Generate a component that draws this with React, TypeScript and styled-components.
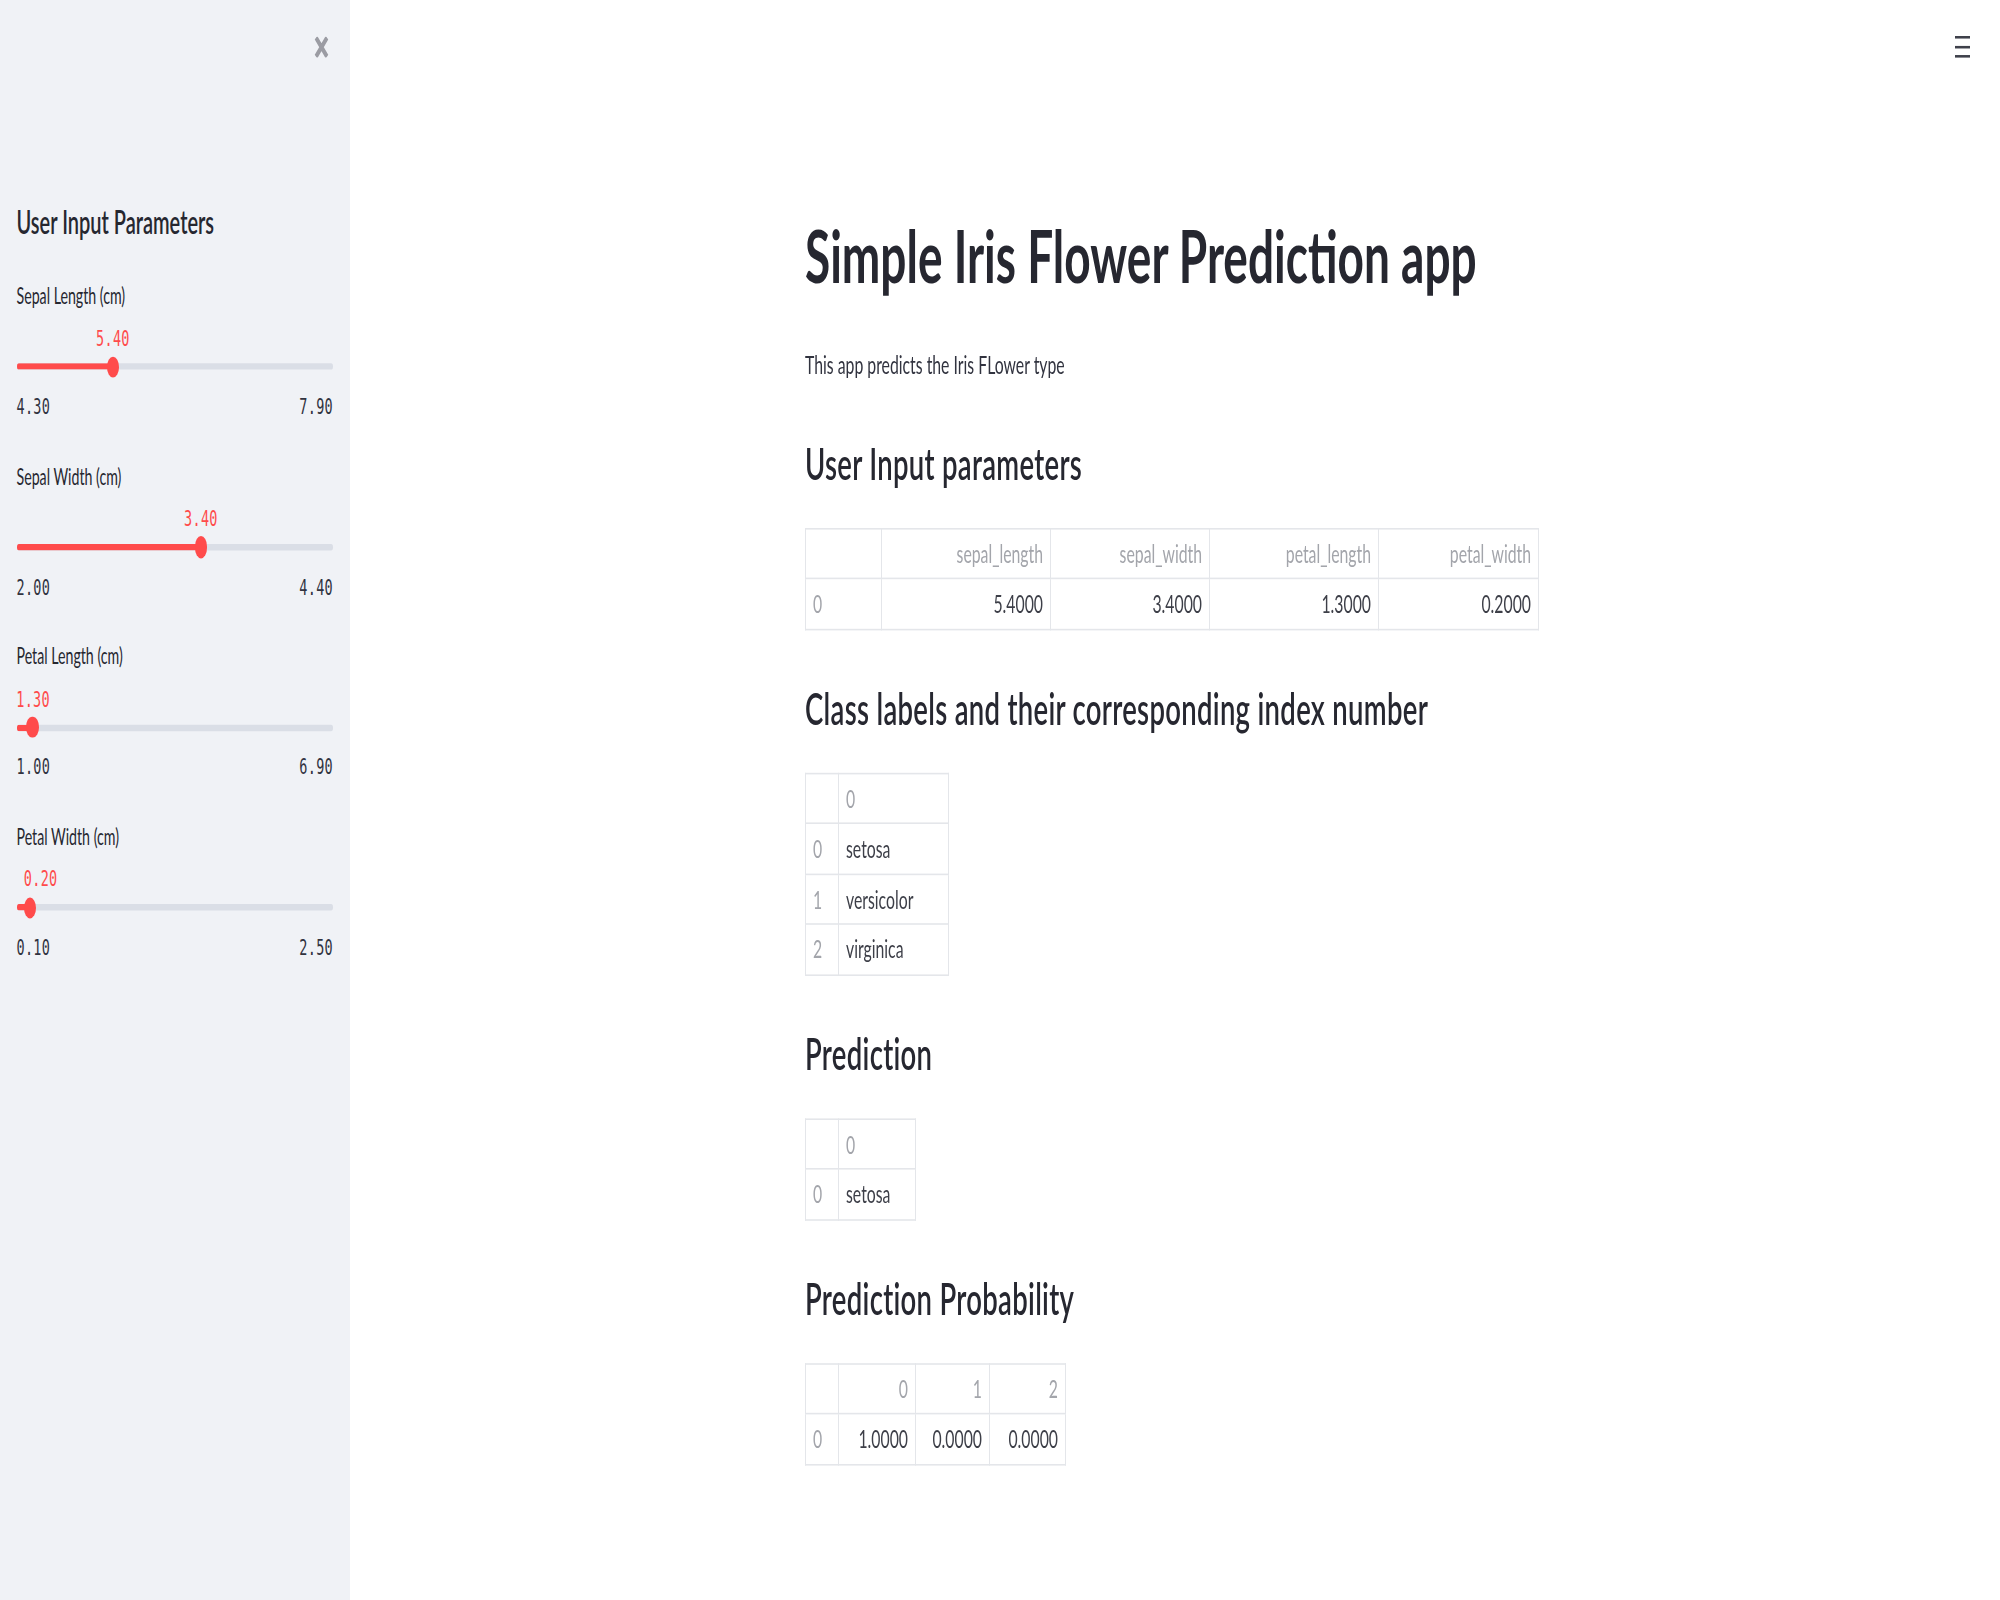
import React from "react";
import styled, { createGlobalStyle } from "styled-components";

const STRETCH = 1.6;

const GlobalStyle = createGlobalStyle`
  html, body {
    margin: 0;
    padding: 0;
    background: #ffffff;
  }
  body {
    font-family: Lato, "Liberation Sans", sans-serif;
    color: #262730;
  }
  * { box-sizing: border-box; }
`;

const Viewport = styled.div`
  width: 2000px;
  height: 1600px;
  overflow: hidden;
`;

const Stage = styled.div`
  width: 2000px;
  height: ${1600 / STRETCH}px;
  transform: scaleY(${STRETCH});
  transform-origin: 0 0;
  display: grid;
  grid-template-columns: 350px 1fr;
`;

/* ---------- Sidebar ---------- */

const Sidebar = styled.aside`
  background: #f0f2f6;
  padding: 22.6px 17px 0 16.5px;
  display: flex;
  flex-direction: column;
`;

const CloseRow = styled.div`
  display: flex;
  justify-content: flex-end;
  padding-right: 4.5px;
  height: 13px;
`;

const CloseIcon = styled.svg`
  width: 15px;
  height: 13px;
  display: block;
`;

const SidebarTitle = styled.h2`
  margin: 89.5px 0 23.9px;
  font-size: 20px;
  line-height: 26px;
  height: 26px;
  font-weight: 600;
  color: #262730;
  white-space: nowrap;
`;

const SliderBlock = styled.div`
  display: flex;
  flex-direction: column;
  & + & {
    margin-top: 25.6px;
  }
`;

const SliderLabel = styled.div`
  font-size: 14.2px;
  line-height: 20px;
  height: 20px;
  color: #262730;
`;

const ValueRow = styled.div`
  position: relative;
  height: 16px;
  margin-top: 8.5px;
`;

const monoFont = `"DejaVu Sans Mono", "Liberation Mono", monospace`;

const ThumbValue = styled.span`
  position: absolute;
  top: 0;
  transform: translateX(-50%);
  font-family: ${monoFont};
  font-size: 13.5px;
  line-height: 16px;
  letter-spacing: 0.3px;
  color: #ff4b4b;
  white-space: nowrap;
`;

const TrackRow = styled.div`
  position: relative;
  height: 13.5px;
  margin-top: 3.15px;
  display: flex;
  align-items: center;
`;

const Track = styled.div`
  position: relative;
  width: 100%;
  height: 4px;
  border-radius: 2px;
  background: #dadee6;
  overflow: hidden;
`;

const TrackFill = styled.div`
  height: 100%;
  background: #ff4b4b;
`;

const Thumb = styled.div`
  position: absolute;
  top: 0;
  width: 12.4px;
  height: 13.5px;
  margin-left: -6.2px;
  border-radius: 50%;
  background: #ff4b4b;
`;

const MinMaxRow = styled.div`
  display: flex;
  justify-content: space-between;
  margin-top: 9.9px;
  font-family: ${monoFont};
  font-size: 13.5px;
  line-height: 16px;
  letter-spacing: 0.3px;
  color: #31333f;
`;

/* ---------- Main ---------- */

const Main = styled.main`
  position: relative;
  padding: 132px 0 0 455px;
  display: flex;
  flex-direction: column;
  align-items: flex-start;
`;

const MenuButton = styled.svg`
  position: absolute;
  top: 22.3px;
  right: 30px;
  width: 15px;
  height: 14.5px;
`;

const Title = styled.h1`
  margin: 0;
  font-size: 46px;
  line-height: 56px;
  height: 56px;
  font-weight: 700;
  color: #262730;
  white-space: nowrap;
`;

const Intro = styled.p`
  margin: 26.8px 0 0;
  font-size: 15.8px;
  line-height: 26px;
  font-weight: 400;
  color: #31333f;
`;

const SectionTitle = styled.h2`
  margin: 31px 0 22px;
  font-size: 27.5px;
  letter-spacing: 0.3px;
  line-height: 36px;
  height: 36px;
  font-weight: 600;
  color: #262730;
  white-space: nowrap;
`;

const Table = styled.table<{ $width: number }>`
  width: ${(p) => p.$width}px;
  border-collapse: collapse;
  table-layout: fixed;
  font-size: 15.8px;
  border: 1px solid #e4e6ea;
`;

const Col = styled.col<{ $w: number }>`
  width: ${(p) => p.$w}px;
`;

const HeadCell = styled.th<{ $align: "left" | "right" }>`
  padding: 0 7px;
  height: 30.5px;
  line-height: 30.5px;
  font-weight: 400;
  color: #a3a5ab;
  text-align: ${(p) => p.$align};
  border: 1px solid #e4e6ea;
  white-space: nowrap;
  overflow: hidden;
`;

const IndexCell = styled.th`
  padding: 0 7px;
  height: 30.5px;
  line-height: 30.5px;
  font-weight: 400;
  color: #a3a5ab;
  text-align: left;
  border: 1px solid #e4e6ea;
`;

const DataCell = styled.td<{ $align: "left" | "right" }>`
  padding: 0 7px;
  height: 30.5px;
  line-height: 30.5px;
  color: #3d3f48;
  text-align: ${(p) => p.$align};
  border: 1px solid #e4e6ea;
  white-space: nowrap;
  overflow: hidden;
`;

/* ---------- Data ---------- */

type SliderData = {
  label: string;
  min: number;
  max: number;
  value: number;
  labelX: number;
};

const TRACK_WIDTH = 316.5;

const sliders: SliderData[] = [
  { label: "Sepal Length (cm)", min: 4.3, max: 7.9, value: 5.4, labelX: 96.4 },
  { label: "Sepal Width (cm)", min: 2.0, max: 4.4, value: 3.4, labelX: 184.4 },
  { label: "Petal Length (cm)", min: 1.0, max: 6.9, value: 1.3, labelX: 16.6 },
  { label: "Petal Width (cm)", min: 0.1, max: 2.5, value: 0.2, labelX: 24.2 },
];

type TableData = {
  cols: number[];
  headers: string[];
  align: ("left" | "right")[];
  rows: string[][];
};

const tables: { title: string; data: TableData }[] = [
  {
    title: "User Input parameters",
    data: {
      cols: [76, 169, 159, 169, 160],
      headers: ["sepal_length", "sepal_width", "petal_length", "petal_width"],
      align: ["right", "right", "right", "right"],
      rows: [["5.4000", "3.4000", "1.3000", "0.2000"]],
    },
  },
  {
    title: "Class labels and their corresponding index number",
    data: {
      cols: [33, 110],
      headers: ["0"],
      align: ["left"],
      rows: [["setosa"], ["versicolor"], ["virginica"]],
    },
  },
  {
    title: "Prediction",
    data: {
      cols: [33, 77],
      headers: ["0"],
      align: ["left"],
      rows: [["setosa"]],
    },
  },
  {
    title: "Prediction Probability",
    data: {
      cols: [33, 77, 74, 76],
      headers: ["0", "1", "2"],
      align: ["right", "right", "right"],
      rows: [["1.0000", "0.0000", "0.0000"]],
    },
  },
];

function Slider({ s }: { s: SliderData }) {
  const frac = (s.value - s.min) / (s.max - s.min);
  const pct = `${frac * 100}%`;
  return (
    <SliderBlock>
      <SliderLabel>{s.label}</SliderLabel>
      <ValueRow>
        <ThumbValue style={{ left: `${s.labelX}px` }}>{s.value.toFixed(2)}</ThumbValue>
      </ValueRow>
      <TrackRow>
        <Track>
          <TrackFill style={{ width: pct }} />
        </Track>
        <Thumb style={{ left: `${frac * TRACK_WIDTH}px` }} />
      </TrackRow>
      <MinMaxRow>
        <span>{s.min.toFixed(2)}</span>
        <span>{s.max.toFixed(2)}</span>
      </MinMaxRow>
    </SliderBlock>
  );
}

function DataTable({ d }: { d: TableData }) {
  const width = d.cols.reduce((a, b) => a + b, 0);
  return (
    <Table $width={width}>
      <colgroup>
        {d.cols.map((w, i) => (
          <Col key={i} $w={w} />
        ))}
      </colgroup>
      <thead>
        <tr>
          <HeadCell $align="left" />
          {d.headers.map((h, i) => (
            <HeadCell key={i} $align={d.align[i]}>
              {h}
            </HeadCell>
          ))}
        </tr>
      </thead>
      <tbody>
        {d.rows.map((r, ri) => (
          <tr key={ri}>
            <IndexCell>{ri}</IndexCell>
            {r.map((c, ci) => (
              <DataCell key={ci} $align={d.align[ci]}>
                {c}
              </DataCell>
            ))}
          </tr>
        ))}
      </tbody>
    </Table>
  );
}

export default function App() {
  return (
    <>
      <GlobalStyle />
      <Viewport>
        <Stage>
          <Sidebar>
            <CloseRow>
              <CloseIcon viewBox="0 0 15 13">
                <path
                  d="M2 0.6 L13 12.4 M13 0.6 L2 12.4"
                  stroke="#9b9ca3"
                  strokeWidth="3.4"
                  strokeLinecap="butt"
                  fill="none"
                />
              </CloseIcon>
            </CloseRow>
            <SidebarTitle>User Input Parameters</SidebarTitle>
            {sliders.map((s) => (
              <Slider key={s.label} s={s} />
            ))}
          </Sidebar>
          <Main>
            <MenuButton viewBox="0 0 15 14.5">
              <rect x="0" y="0.5" width="15" height="1.6" fill="#3f414b" />
              <rect x="0" y="6.7" width="15" height="1.6" fill="#3f414b" />
              <rect x="0" y="12.4" width="15" height="1.6" fill="#3f414b" />
            </MenuButton>
            <Title>Simple Iris Flower Prediction app</Title>
            <Intro>This app predicts the Iris FLower type</Intro>
            {tables.map((t) => (
              <React.Fragment key={t.title}>
                <SectionTitle>{t.title}</SectionTitle>
                <DataTable d={t.data} />
              </React.Fragment>
            ))}
          </Main>
        </Stage>
      </Viewport>
    </>
  );
}
